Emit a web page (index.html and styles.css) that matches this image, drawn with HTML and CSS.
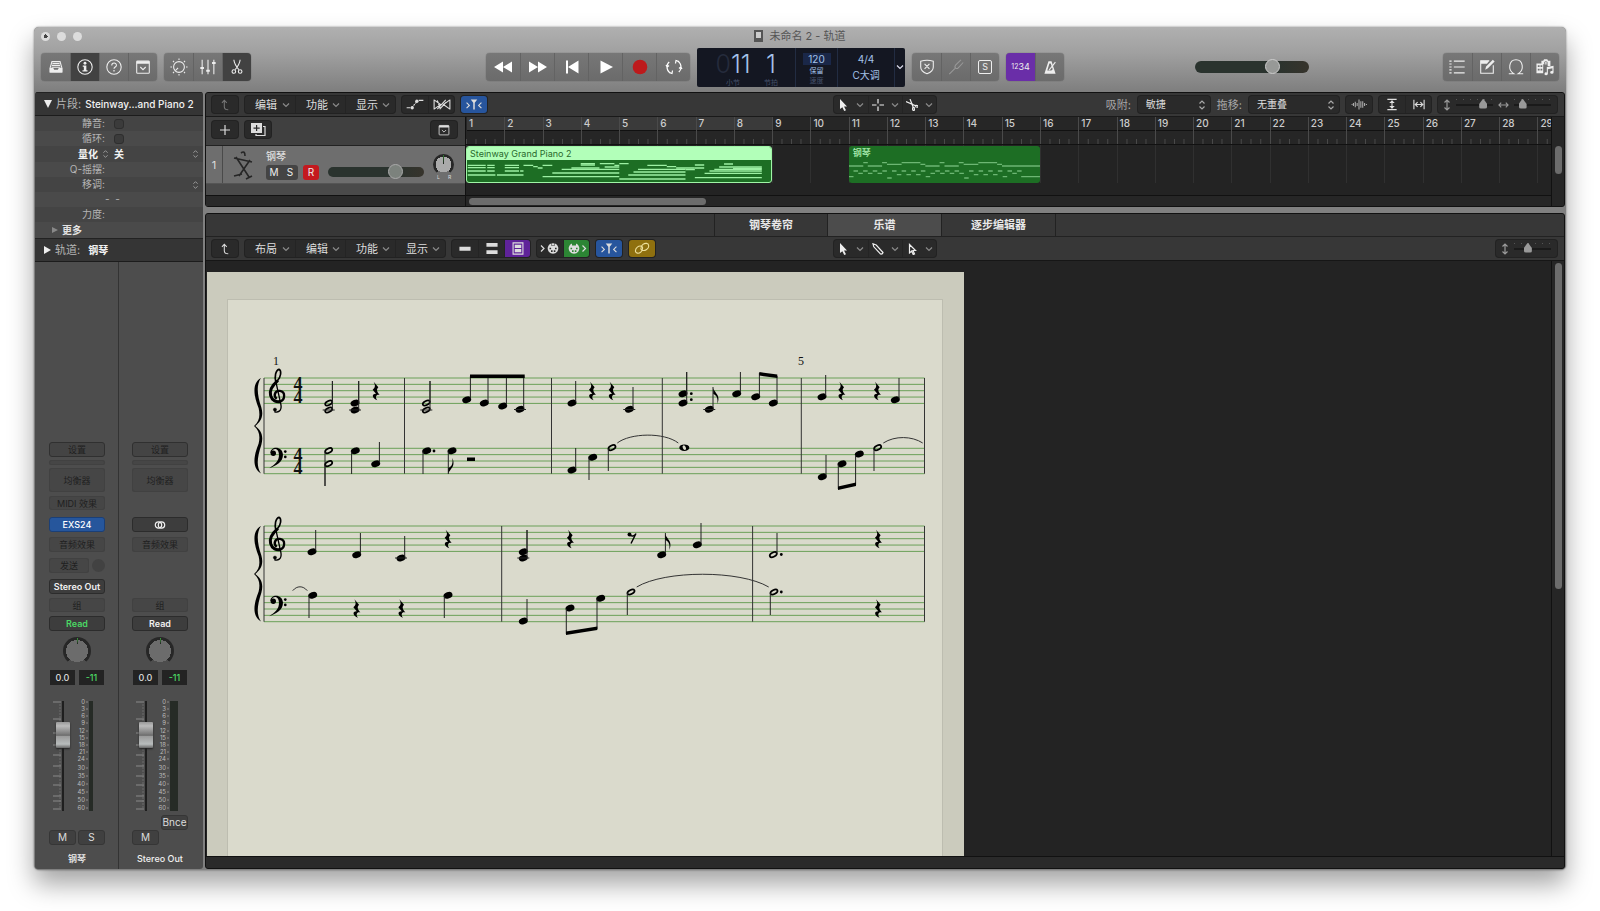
FILE: index.html
```html
<!DOCTYPE html>
<html lang="zh-CN">
<head>
  <meta charset="UTF-8" />
  <meta name="viewport" content="width=device-width, initial-scale=1.0"/>
  <title>未命名 2 - 轨道</title>
  <link rel="stylesheet" href="styles.css">
</head>
<body>
  <!-- Icon sprite -->
  <svg class="sprite" aria-hidden="true">
    <symbol id="i-chev" viewBox="0 0 8 8"><path class="ln" d="M1 2.500l3 3 3-3"/></symbol>
    <symbol id="i-updown" viewBox="0 0 8 12"><path class="ln" d="M1.500 4.500L4 2l2.500 2.500M1.500 7.500L4 10l2.500-2.500"/></symbol>
    <symbol id="i-library" viewBox="0 0 20 20"><path class="ln" d="M5.500 4h9l2 7v4.500h-13V11zM6 6.200h8M5.500 8.200h9M5 10.200h10"/><path d="M3 11h4l1 2h4l1-2h4v5H3z"/></symbol>
    <symbol id="i-info" viewBox="0 0 20 20"><circle class="ln" cx="10" cy="10" r="8"/><circle cx="10" cy="5.800" r="1.600"/><path d="M7.500 8.200h4v5.300h1.300v1.500H7.200v-1.500h1.500V9.700H7.500z"/></symbol>
    <symbol id="i-help" viewBox="0 0 20 20"><circle class="ln" cx="10" cy="10" r="8"/><path class="ln" d="M7.500 8.200c0-3.400 5.200-3.400 5.200-.2 0 2-2.700 2-2.700 4"/><circle cx="10" cy="14.300" r=".9"/></symbol>
    <symbol id="i-panel" viewBox="0 0 20 20"><rect class="ln" x="3" y="3.500" width="14" height="13.500" rx="1"/><path d="M3 3.500h14v3H3z"/><path class="ln" d="M7 10l3 3 3-3"/></symbol>
    <symbol id="i-dial" viewBox="0 0 20 20"><circle class="ln" cx="10" cy="10" r="6"/><path class="ln" d="M9 11l-3 3M10 .5v1.700M10 17.800v1.700M.5 10h1.700M17.800 10h1.700M3.300 3.300l1.200 1.200M15.500 15.500l1.200 1.200M3.300 16.700l1.200-1.200M15.500 4.500l1.200-1.200"/></symbol>
    <symbol id="i-mixer" viewBox="0 0 20 20"><path class="ln" d="M3.500 2v16M10 2v16M16.500 2v16"/><path d="M1.500 10h4v2.200h-4zM8 13h4v2.200H8zM14.500 4.500h4v2.200h-4z"/></symbol>
    <symbol id="i-scissors" viewBox="0 0 20 20"><path class="ln" d="M6.500 2c.5 4.500 3 8 5.500 11M13.500 2c-.5 4.500-3 8-5.500 11"/><circle class="ln" cx="6.500" cy="15" r="2"/><circle class="ln" cx="13.500" cy="15" r="2"/></symbol>
    <symbol id="i-rew" viewBox="0 0 20 20"><path d="M10 4.500v11L1 10zM19 4.500v11L10 10z"/></symbol>
    <symbol id="i-fwd" viewBox="0 0 20 20"><path d="M10 4.500v11l9-5.500zM1 4.500v11l9-5.500z"/></symbol>
    <symbol id="i-start" viewBox="0 0 20 20"><path d="M4 3.500h2v13H4zM16.500 3.500v13L6 10z"/></symbol>
    <symbol id="i-play" viewBox="0 0 20 20"><path d="M4.500 3.500v13L17 10z"/></symbol>
    <symbol id="i-rec" viewBox="0 0 20 20"><circle cx="10" cy="10" r="7.300"/></symbol>
    <symbol id="i-cycle" viewBox="0 0 20 20"><path class="ln" d="M7.800 16.500A6.800 6.800 0 0 1 5.200 5M12.200 3.500A6.800 6.800 0 0 1 14.800 15M4.800 15.500l3.200 1 .5-3M15.200 4.500l-3.200-1-.5 3M2 8l1.200 2L5 8.500M18 12l-1.200-2L15 11.500"/></symbol>
    <symbol id="i-shield" viewBox="0 0 20 20"><path class="ln" d="M3 3.500Q10 1.500 17 3.500V10q0 5-7 7.500-7-2.500-7-7.500zM7.300 6.500l5.400 5.500M12.700 6.500L7.300 12"/></symbol>
    <symbol id="i-fork" viewBox="0 0 20 20"><path class="ln" d="M2.500 18l7-7M15.500 2L9.500 8q-1.500 2 .2 3.300 1.500 1 2.800-.3L18 5"/></symbol>
    <symbol id="i-metro" viewBox="0 0 20 20"><path d="M8.300 3.500h3.400l4.500 14H3.800zM9.300 6l-2.300 8h4.500L13 12.500 10.800 6z" fill-rule="evenodd"/><path class="ln" d="M9 13.500l7-9"/></symbol>
    <symbol id="i-list" viewBox="0 0 20 20"><path class="ln" d="M6.500 3.500h12M6.500 10h12M6.500 16.500h12M1.500 3.500h2.500M1.500 6.700h2.500M1.500 10h2.500M1.500 13.200h2.500M1.500 16.500h2.500"/></symbol>
    <symbol id="i-note" viewBox="0 0 20 20"><path class="ln" d="M12.500 3H3v14h14V8"/><path d="M3 3h9.500L10 6.500H3zM8 13l1-3.500L16.500 2l2 2L11 11.500z"/></symbol>
    <symbol id="i-loop" viewBox="0 0 20 20"><path class="ln" d="M2 17.500h5.500c-7-4-5.500-15.500 2.500-15.500s9.500 11.500 2.500 15.500H18"/></symbol>
    <symbol id="i-media" viewBox="0 0 20 20"><path d="M6 3h2l1-1.500h3.500l1 1.500H16V9h-3V7H8v10H.500V6H6zM11 3.500a2 2 0 1 0 .01 4 2 2 0 0 0-.01-4zM2 8v2h2V8zM2 12v2h2v-2zM5 8v2h2V8zM5 12v2h2v-2z" fill-rule="evenodd"/><path d="M12 10l7.500-1.500v7.500a1.900 1.600 0 1 1-1.300-1.500V11.500l-5 1v5a1.900 1.600 0 1 1-1.200-1.500z"/><circle cx="11" cy="5.500" r="1"/></symbol>
    <symbol id="i-up" viewBox="0 0 16 16"><path class="ln" d="M4.500 5.500L7.200 2.500l2.800 3M7.200 2.500V10q0 3.500 4.500 3.500"/></symbol>
    <symbol id="i-auto" viewBox="0 0 20 14"><path class="ln" d="M1 10.500h4M14 2.500h5"/><path class="ln dash" d="M6.500 10.500L12 4"/><circle cx="7" cy="10.500" r="1.800"/><circle cx="12" cy="3.500" r="1.800"/></symbol>
    <symbol id="i-flex" viewBox="0 0 20 14"><path class="ln" d="M1.500 1.500v11M18.500 1.500v11M1.500 2l7 5-7 5M18.500 2l-7 5 7 5M5 12l9-10M5 2.500l3 9 6.500-7"/></symbol>
    <symbol id="i-catch" viewBox="0 0 20 14"><path class="ln" d="M2 5l3 3-3 3M18 5l-3 3 3 3"/><path d="M6.500 1.500h7L10.800 5v7.500H9.200V5z"/></symbol>
    <symbol id="i-plus" viewBox="0 0 12 12"><path class="ln" d="M6 1v10M1 6h10"/></symbol>
    <symbol id="i-dup" viewBox="0 0 16 14"><path d="M1 0h11v10H1zM6 2v2.500H3.500v1.200H6V8h1.200V5.700h2.500V4.500H7.200V2z" fill-rule="evenodd"/><path class="ln" d="M13 3.500h2v9H6v-1.500"/></symbol>
    <symbol id="i-cursor" viewBox="0 0 12 12"><path d="M3 0l7 7.500H7l2 3.800-1.800.7-1.800-3.800L3 10z"/></symbol>
    <symbol id="i-cursor2" viewBox="0 0 12 12"><path class="ln" d="M3.500 1.500l6 6H7l1.500 3.500-1.300.5L5.700 8l-2.200 2z"/></symbol>
    <symbol id="i-cross" viewBox="0 0 12 12"><path class="ln" d="M6 0v4.500M6 7.500V12M0 6h4.500M7.500 6H12"/></symbol>
    <symbol id="i-pencil" viewBox="0 0 12 12"><path class="ln" d="M1 .8l.8 3 6.700 7.200q2 .5 2.500-1.500L4.200 2zM3.500 2.500"/></symbol>
    <symbol id="i-cut" viewBox="0 0 12 12"><path class="ln" d="M0 2.500l9 4M4 0l3.500 9M9 6.500q3-.5 3 1t-3 0M7 8q-1 3 .5 3.500T8 8"/></symbol>
    <symbol id="i-wave" viewBox="0 0 18 14"><path class="ln" d="M1 7h1M3 5.500v3M5 4v6M7 5.500v3M9 1.500v11M11 3.500v7M13 3.500v7M15 5.500v3M17 6.500v1"/></symbol>
    <symbol id="i-vfit" viewBox="0 0 14 14"><path class="ln" d="M2 1.500h10M2 12.500h10M7 3v8"/><path d="M7 2.500l3 3H4zM7 11.500l3-3H4z"/></symbol>
    <symbol id="i-hfit" viewBox="0 0 14 14"><path class="ln" d="M1.500 2v10M12.500 2v10M3 7h8M5.500 4.500L3 7l2.500 2.500M8.500 4.500L11 7 8.500 9.500"/></symbol>
    <symbol id="i-vert" viewBox="0 0 8 12"><path class="ln" d="M4 1.500v9M1.500 3.500L4 1l2.500 2.500M1.500 8.500L4 11l2.500-2.500"/></symbol>
    <symbol id="i-horz" viewBox="0 0 12 8"><path class="ln" d="M1.500 4h9M3.500 1.500L1 4l2.500 2.500M8.500 1.500L11 4 8.500 6.500"/></symbol>
    <symbol id="i-v1" viewBox="0 0 14 14"><path d="M1 5h12v4.500H1z"/></symbol>
    <symbol id="i-v2" viewBox="0 0 14 14"><path d="M1 1h12v4H1zM1 9h12v4H1z"/></symbol>
    <symbol id="i-v3" viewBox="0 0 14 14"><path class="ln" d="M1.700 1h10.600v12H1.700z"/><path d="M3.500 3h7v3.500h-7zM3.500 7.500h7V11h-7z"/></symbol>
    <symbol id="i-midi-in" viewBox="0 0 20 12"><path class="ln" d="M1 3l3 3-3 3"/><path d="M13 .7l1.500.2v1.600h-3V.9zM11 1v2h4V1a5.300 5.300 0 1 1-4 0zM9.500 5.200v1.600h1.600V5.200zM11 7.800v1.600h1.600V7.800zM13.800 7.800v1.600h1.600V7.800zM15 5.200v1.600h1.600V5.200z" fill-rule="evenodd"/></symbol>
    <symbol id="i-midi-out" viewBox="0 0 20 12"><path class="ln" d="M15.500 3l3 3-3 3"/><path d="M5 1v2h4V1a5.300 5.300 0 1 1-4 0zM3.500 5.200v1.600h1.600V5.200zM5 7.800v1.600h1.600V7.800zM7.800 7.800v1.600h1.600V7.800zM9 5.200v1.600h1.600V5.200z" fill-rule="evenodd"/></symbol>
    <symbol id="i-link" viewBox="0 0 18 14"><path class="ln" d="M9.500 7.500C10.500 4 6.500 3.500 4 5.500S1 11.500 4 12s5-2 5.500-4.500M8 6c-1 3.500 3 4 6 2s3-6 0-6.500S8.500 3.500 8 6"/></symbol>
    <symbol id="i-stereo" viewBox="0 0 12 10"><circle class="ln" cx="4.500" cy="5" r="3.200"/><circle class="ln" cx="7.500" cy="5" r="3.200"/></symbol>
    <symbol id="i-keys" viewBox="0 0 24 32"><path class="stand" d="M4 8l13 20M18 11L7 27M2 9l18 4M9 4q4-3 4 3M2 27l8-2M14 30l6-3"/></symbol>
  </svg>

  <div class="window">
    <!-- Title bar + control bar -->
    <header class="topbar">
      <div class="titlebar">
        <div class="lights"><i class="edited"></i><i></i><i></i></div>
        <h1><span class="doc"></span>未命名 2 - 轨道</h1>
      </div>
      <div class="controls">
        <div class="group">
          <button aria-label="资源库"><svg><use href="#i-library"/></svg></button>
          <button class="pressed" aria-label="检查器"><svg><use href="#i-info"/></svg></button>
          <button aria-label="快速帮助"><svg><use href="#i-help"/></svg></button>
          <button aria-label="工具栏"><svg><use href="#i-panel"/></svg></button>
        </div>
        <div class="group">
          <button aria-label="智能控制"><svg><use href="#i-dial"/></svg></button>
          <button aria-label="混音器"><svg><use href="#i-mixer"/></svg></button>
          <button class="pressed" aria-label="编辑器"><svg><use href="#i-scissors"/></svg></button>
        </div>
        <div class="space-left"></div>
        <div class="group transport">
          <button aria-label="倒回"><svg><use href="#i-rew"/></svg></button>
          <button aria-label="快进"><svg><use href="#i-fwd"/></svg></button>
          <button aria-label="返回开头"><svg><use href="#i-start"/></svg></button>
          <button aria-label="播放"><svg><use href="#i-play"/></svg></button>
          <button class="rec" aria-label="录音"><svg><use href="#i-rec"/></svg></button>
          <button aria-label="循环"><svg><use href="#i-cycle"/></svg></button>
        </div>
        <div class="lcd">
          <div class="lcd-pos">
            <div><b><span class="off">0</span>11</b><small>小节</small></div>
            <div><b>1</b><small>节拍</small></div>
          </div>
          <div class="lcd-tempo"><span class="bpm">120</span><span>保留</span><small>速度</small></div>
          <div class="lcd-key"><span>4/4</span><span>C大调</span></div>
          <button class="lcd-menu" aria-label="显示模式"><svg><use href="#i-chev"/></svg></button>
        </div>
        <div class="group three">
          <button aria-label="替换"><svg><use href="#i-shield"/></svg></button>
          <button class="dim" aria-label="调音器"><svg><use href="#i-fork"/></svg></button>
          <button aria-label="独奏"><span class="solo-box">S</span></button>
        </div>
        <div class="group">
          <button class="count"><small>12</small>34</button>
          <button aria-label="节拍器"><svg><use href="#i-metro"/></svg></button>
        </div>
        <div class="space-mid"></div>
        <input class="volume master" type="range" min="0" max="100" value="71" aria-label="主音量">
        <div class="space-right"></div>
        <div class="group">
          <button aria-label="列表"><svg><use href="#i-list"/></svg></button>
          <button aria-label="记事本"><svg><use href="#i-note"/></svg></button>
          <button aria-label="循环浏览器"><svg><use href="#i-loop"/></svg></button>
          <button aria-label="媒体"><svg><use href="#i-media"/></svg></button>
        </div>
      </div>
    </header>

    <main class="workspace">
      <!-- Inspector -->
      <aside class="inspector">
        <div class="insp-head"><i class="tri down"></i>片段: <b>Steinway...and Piano 2</b></div>
        <div class="params">
          <div class="param"><label for="mute">静音:</label><input type="checkbox" id="mute"></div>
          <div class="param"><label for="loop">循环:</label><input type="checkbox" id="loop"></div>
          <div class="param bright"><span class="name">量化 <svg><use href="#i-updown"/></svg></span><span class="value">关</span><svg><use href="#i-updown"/></svg></div>
          <div class="param"><span class="name">Q-摇摆:</span></div>
          <div class="param"><span class="name">移调:</span><span class="value"></span><svg><use href="#i-updown"/></svg></div>
          <div class="param dashes"><span class="name"></span>-&nbsp; -</div>
          <div class="param"><span class="name">力度:</span></div>
          <div class="param more"><i class="tri right"></i>更多</div>
        </div>
        <div class="insp-head"><i class="tri right"></i>轨道: <b class="cjk">钢琴</b></div>

        <div class="mixer">
          <section class="strip">
            <button class="slot dark h-setup">设置</button>
            <span class="slot thin"></span>
            <button class="slot flat h-eq">均衡器</button>
            <button class="slot flat h-midi">MIDI 效果</button>
            <button class="slot blue">EXS24</button>
            <button class="slot flat h-fx">音频效果</button>
            <div class="send"><button class="slot flat">发送</button><i></i></div>
            <button class="slot lit">Stereo Out</button>
            <button class="slot flat h-group">组</button>
            <button class="slot lit green">Read</button>
            <input class="knob" type="range" aria-label="声相">
            <div class="readout"><span>0.0</span><span class="green">-11</span></div>
            <div class="fader">
              <svg class="scale" data-meter="4" width="56" height="112"></svg>
              <input type="range" min="0" max="100" value="76" aria-label="音量">
            </div>
            <div class="bnce"></div>
            <div class="ms"><button>M</button><button>S</button></div>
            <div class="strip-name cjk">钢琴</div>
          </section>
          <section class="strip">
            <button class="slot dark h-setup">设置</button>
            <span class="slot thin"></span>
            <button class="slot flat h-eq">均衡器</button>
            <span class="slot empty h-midi"></span>
            <button class="slot lit" aria-label="立体声"><svg><use href="#i-stereo"/></svg></button>
            <button class="slot flat h-fx">音频效果</button>
            <div class="send"></div>
            <span class="slot empty"></span>
            <button class="slot flat h-group">组</button>
            <button class="slot lit">Read</button>
            <input class="knob" type="range" aria-label="声相">
            <div class="readout"><span>0.0</span><span class="green">-11</span></div>
            <div class="fader">
              <svg class="scale" data-meter="8" width="56" height="112"></svg>
              <input type="range" min="0" max="100" value="76" aria-label="音量">
            </div>
            <div class="bnce"><button>Bnce</button></div>
            <div class="ms"><button>M</button></div>
            <div class="strip-name">Stereo Out</div>
          </section>
        </div>
      </aside>

      <div class="main">
        <!-- Tracks area -->
        <section class="tracks">
          <div class="toolbar">
            <div class="tb-left">
              <button class="tb-btn faded" aria-label="上一级"><svg class="s16"><use href="#i-up"/></svg></button>
              <div class="tb-group menus">
                <button>编辑<svg><use href="#i-chev"/></svg></button>
                <button>功能<svg><use href="#i-chev"/></svg></button>
                <button>显示<svg><use href="#i-chev"/></svg></button>
              </div>
              <div class="tb-group icons">
                <button aria-label="自动化"><svg><use href="#i-auto"/></svg></button>
                <button aria-label="Flex"><svg><use href="#i-flex"/></svg></button>
              </div>
              <button class="tb-btn blue" aria-label="跟随"><svg class="wide"><use href="#i-catch"/></svg></button>
            </div>
            <div class="tb-group tools">
              <button aria-label="指针"><svg class="s12"><use href="#i-cursor"/></svg><svg class="chev"><use href="#i-chev"/></svg></button>
              <button aria-label="选取框"><svg class="s12"><use href="#i-cross"/></svg><svg class="chev"><use href="#i-chev"/></svg></button>
              <button aria-label="剪刀"><svg class="s12"><use href="#i-cut"/></svg><svg class="chev"><use href="#i-chev"/></svg></button>
            </div>
            <div class="tb-right">
              <label for="snap">吸附:</label>
              <span class="select snap"><select id="snap"><option>敏捷</option></select><svg><use href="#i-updown"/></svg></span>
              <label for="drag">拖移:</label>
              <span class="select drag"><select id="drag"><option>无重叠</option></select><svg><use href="#i-updown"/></svg></span>
              <button class="tb-btn" aria-label="波形缩放"><svg class="wide"><use href="#i-wave"/></svg></button>
              <div class="tb-group icons">
                <button aria-label="垂直适应"><svg class="s14"><use href="#i-vfit"/></svg></button>
                <button aria-label="水平适应"><svg class="s14"><use href="#i-hfit"/></svg></button>
              </div>
              <div class="tb-group zoom">
                <svg class="v"><use href="#i-vert"/></svg><input type="range" value="80" aria-label="垂直缩放">
                <svg class="h"><use href="#i-horz"/></svg><input type="range" value="16" aria-label="水平缩放">
              </div>
            </div>
          </div>
          <div class="arrange">
            <div class="track-col">
              <div class="track-tools">
                <button class="tb-btn" aria-label="新建轨道"><svg class="s12"><use href="#i-plus"/></svg></button>
                <button class="tb-btn" aria-label="复制轨道"><svg class="s16"><use href="#i-dup"/></svg></button>
                <button class="tb-btn last" aria-label="轨道头设置"><svg class="s16"><use href="#i-panel"/></svg></button>
              </div>
              <div class="track">
                <span class="num">1</span>
                <svg class="keys"><use href="#i-keys"/></svg>
                <div class="track-info">
                  <span class="track-name">钢琴</span>
                  <div class="track-ctl">
                    <div class="msr"><button>M</button><button>S</button></div>
                    <button class="rbtn">R</button>
                    <input class="volume" type="range" min="0" max="100" value="74" aria-label="轨道音量">
                  </div>
                </div>
                <div class="pan"><input class="knob small" type="range" aria-label="声相"><span>L</span><span>R</span></div>
              </div>
              <div class="track-foot"></div>
            </div>
            <div class="timeline">
              <div class="ruler" id="ruler"></div>
              <div class="lane">
                <div class="grid" id="grid"></div>
                <div class="regions">
                  <div class="region selected"><span>Steinway Grand Piano 2</span><svg id="region1" viewBox="0 0 813 66" preserveAspectRatio="none"></svg></div>
                  <div class="region"><span class="cjk">钢琴</span><svg id="region2" viewBox="0 0 509 66" preserveAspectRatio="none"></svg></div>
                </div>
              </div>
              <div class="hscroll"><i></i></div>
            </div>
            <div class="vscroll"><i></i></div>
          </div>
        </section>

        <!-- Score editor -->
        <section class="editor">
          <nav class="tabs">
            <button>钢琴卷帘</button>
            <button class="active">乐谱</button>
            <button>逐步编辑器</button>
          </nav>
          <div class="toolbar">
            <div class="tb-left">
              <button class="tb-btn" aria-label="上一级"><svg class="s16"><use href="#i-up"/></svg></button>
              <div class="tb-group menus">
                <button>布局<svg><use href="#i-chev"/></svg></button>
                <button>编辑<svg><use href="#i-chev"/></svg></button>
                <button>功能<svg><use href="#i-chev"/></svg></button>
                <button>显示<svg><use href="#i-chev"/></svg></button>
              </div>
              <div class="tb-group icons">
                <button aria-label="线性视图"><svg class="s14"><use href="#i-v1"/></svg></button>
                <button aria-label="折行视图"><svg class="s14"><use href="#i-v2"/></svg></button>
                <button class="purple" aria-label="页面视图"><svg class="s14"><use href="#i-v3"/></svg></button>
              </div>
              <div class="tb-group icons">
                <button aria-label="MIDI 输入"><svg><use href="#i-midi-in"/></svg></button>
                <button class="greenbg" aria-label="MIDI 输出"><svg><use href="#i-midi-out"/></svg></button>
              </div>
              <button class="tb-btn blue" aria-label="跟随"><svg class="wide"><use href="#i-catch"/></svg></button>
              <button class="tb-btn gold" aria-label="链接"><svg class="wide"><use href="#i-link"/></svg></button>
            </div>
            <div class="tb-group tools">
              <button aria-label="指针"><svg class="s12"><use href="#i-cursor"/></svg><svg class="chev"><use href="#i-chev"/></svg></button>
              <button aria-label="铅笔"><svg class="s12"><use href="#i-pencil"/></svg><svg class="chev"><use href="#i-chev"/></svg></button>
              <button aria-label="选择"><svg class="s12"><use href="#i-cursor2"/></svg><svg class="chev"><use href="#i-chev"/></svg></button>
            </div>
            <div class="tb-right">
              <div class="tb-group zoom">
                <svg class="v"><use href="#i-vert"/></svg><input type="range" value="34" aria-label="垂直缩放">
              </div>
            </div>
          </div>
          <div class="score-area">
            <div class="desk">
              <svg id="score" width="757" height="586" viewBox="207 272 757 586"></svg>
            </div>
            <div class="vscroll tall"><i></i></div>
          </div>
          <div class="editor-foot"></div>
        </section>
      </div>
    </main>
  </div>
  <script src="score.js"></script>
</body>
</html>
```

FILE: styles.css
```css
* {
  box-sizing: border-box;
}

body {
  margin: 0;
  padding: 27px 34px 41px 34px;
  min-height: 100vh;
  display: flex;
  background: #fff;
  font-family: Inter, "Noto Sans CJK SC", sans-serif;
  font-size: 11px;
  line-height: 14px;
  color: #ddd;
}

button, select, input {
  font: inherit;
  color: inherit;
  margin: 0;
  padding: 0;
  border: 0;
  background: none;
}

button {
  display: flex;
  align-items: center;
  justify-content: center;
}

svg {
  display: block;
  fill: currentColor;
}

.sprite {
  position: absolute;
  width: 0;
  height: 0;
}

.ln {
  fill: none;
  stroke: currentColor;
  stroke-width: 1.2;
}

.dash {
  stroke-dasharray: 2 1;
}

.cjk {
  font-family: "Noto Sans CJK SC", sans-serif;
}

.window {
  flex: 1;
  display: flex;
  flex-direction: column;
  min-width: 0;
  padding: 0 1px 1px;
  border-radius: 5px;
  background: #808080;
  box-shadow: 0 0 2px rgba(0, 0, 0, 0.5), 0 14px 26px rgba(0, 0, 0, 0.36);
}

/* Top bar */
.topbar {
  height: 65px;
  margin: 0 -1px;
  padding: 0 7px;
  border-radius: 5px 5px 0 0;
  background: linear-gradient(#b0b0b0, #a0a0a0 40%, #7e7e7e);
}

.titlebar {
  display: grid;
  grid-template-columns: 1fr auto 1fr;
  align-items: center;
  height: 18px;
}

.lights {
  display: flex;
  gap: 7px;
}

.lights i {
  width: 9px;
  height: 9px;
  border-radius: 50%;
  background: #dcdcdc;
}

.lights .edited {
  background: radial-gradient(circle, #444 0 2px, #dcdcdc 2px);
}

h1 {
  display: flex;
  align-items: center;
  gap: 6px;
  margin: 0;
  font-size: 11px;
  font-weight: 400;
  line-height: 18px;
  color: #555;
}

.doc {
  width: 9px;
  height: 12px;
  border: 2px solid #555;
  border-bottom-width: 4px;
  background: #ccc;
}

.controls {
  display: flex;
  align-items: center;
  gap: 7px;
  height: 44px;
}

.space-left { flex: 222; }
.space-mid { flex: 117; }
.space-right { flex: 121; }

.group {
  display: flex;
  height: 28px;
  border-radius: 4px;
  overflow: hidden;
  background: linear-gradient(#777, #6b6b6b);
  box-shadow: 0 0 1px #444;
  color: #eee;
}

.group button {
  width: 29px;
  border-left: 1px solid #636363;
}

.group button:first-child {
  border-left: 0;
}

.group svg {
  width: 18px;
  height: 18px;
}

.group .pressed {
  background: #424242;
}

.transport button {
  width: 34px;
}

.transport svg {
  width: 20px;
  height: 20px;
  color: #fff;
}

.transport .rec svg {
  color: #bd1a1c;
}

.three .dim {
  color: #989898;
}

.solo-box {
  width: 14px;
  height: 14px;
  border: 1px solid #eee;
  border-radius: 2px;
  font-size: 9px;
  line-height: 12px;
}

.group .count {
  background: #6a2ea8;
  font-size: 9px;
}

.count small {
  font-size: 7px;
}

.lcd {
  display: flex;
  height: 39px;
  border-radius: 2px;
  background: #141722;
  color: #a4c2e8;
}

.lcd > * + * {
  border-left: 1px solid #222c42;
}

.lcd small {
  font-size: 7px;
  line-height: 8px;
  color: #44506a;
}

.lcd-pos {
  display: flex;
  width: 98px;
  padding-left: 17px;
}

.lcd-pos div {
  display: flex;
  flex-direction: column;
  align-items: center;
  width: 38px;
}

.lcd-pos b {
  font-size: 25px;
  font-weight: 300;
  line-height: 30px;
  padding-top: 1px;
}

.off {
  color: #252b3c;
}

.lcd-tempo {
  display: flex;
  flex-direction: column;
  align-items: center;
  width: 42px;
  padding-top: 5px;
  font-size: 7px;
  line-height: 12px;
}

.bpm {
  width: 28px;
  background: #1a2748;
  font-size: 10px;
  text-align: center;
}

.lcd-key {
  display: flex;
  flex-direction: column;
  align-items: center;
  width: 57px;
  padding-top: 3px;
  font-size: 10px;
  line-height: 16px;
}

.lcd-menu {
  width: 11px;
  color: #dde;
}

.lcd-menu svg {
  width: 8px;
  height: 8px;
}

/* Horizontal volume sliders */
.volume {
  appearance: none;
  width: 96px;
  height: 16px;
}

.volume::-webkit-slider-runnable-track {
  height: 10px;
  border-radius: 5px;
  background: linear-gradient(90deg, #2a332e 70%, #37342c);
}

.volume::-webkit-slider-thumb {
  appearance: none;
  width: 15px;
  height: 15px;
  margin-top: -3px;
  border: 1px solid #aaa;
  border-radius: 50%;
  background: #7c827d;
}

.volume.master {
  width: 114px;
}

.volume.master::-webkit-slider-runnable-track {
  height: 12px;
  border-radius: 6px;
}

.volume.master::-webkit-slider-thumb {
  margin-top: -2px;
  border-color: #ccc;
  background: #979997;
}

.workspace {
  flex: 1;
  display: flex;
  gap: 2px;
  min-height: 0;
}

/* Inspector */
.inspector {
  display: flex;
  flex-direction: column;
  width: 168px;
  background: #4d4d4d;
  border-radius: 3px;
  overflow: hidden;
}

.insp-head {
  display: flex;
  align-items: center;
  gap: 4px;
  height: 24px;
  padding-left: 9px;
  border-top: 1px solid #222;
  border-bottom: 1px solid #1c1c1c;
  background: #353535;
  color: #b5b5b5;
  white-space: nowrap;
}

.insp-head b {
  font-size: 10px;
  font-weight: 500;
  color: #f2f2f2;
}

.insp-head .cjk {
  font-weight: 700;
  padding-left: 4px;
}

.tri.down {
  border: 4px solid transparent;
  border-top: 8px solid #eee;
  border-bottom: 0;
}

.tri.right {
  border: 4px solid transparent;
  border-left: 7px solid #eee;
  border-right: 0;
}

.params {
  background: #444;
}

.param {
  display: flex;
  align-items: center;
  height: 15px;
  padding-right: 4px;
  font-size: 10px;
  line-height: 15px;
  color: #b4b4b4;
}

.param:nth-child(even) {
  background: #4a4a4a;
}

.param label, .param .name {
  display: flex;
  align-items: center;
  justify-content: flex-end;
  width: 70px;
}

.param input {
  appearance: none;
  width: 10px;
  height: 10px;
  margin-left: 9px;
  border: 1px solid #2e2e2e;
  border-radius: 3px;
  background: #3b3b3b;
}

.param svg {
  width: 7px;
  height: 10px;
  color: #999;
}

.param .name svg {
  margin-left: 4px;
}

.param.bright {
  height: 16px;
  font-weight: 700;
  color: #f2f2f2;
}

.bright .name {
  width: 74px;
}

.bright .value {
  padding-left: 5px;
}

.param .value {
  flex: 1;
}

.param.more {
  height: 16px;
  gap: 4px;
  padding-left: 17px;
  font-weight: 700;
  color: #e2e2e2;
}

.more .tri.right {
  border-width: 3px 0 3px 6px;
  border-left-color: #888;
}

.mixer {
  flex: 1;
  display: flex;
}

.strip {
  flex: 0 0 83px;
  display: flex;
  flex-direction: column;
  justify-content: flex-end;
  padding: 0 13px 3px 14px;
}

.strip + .strip {
  padding-left: 13px;
  border-left: 1px solid #333;
}

.slot {
  height: 15px;
  margin-bottom: 5px;
  border-radius: 3px;
  font-size: 9px;
  line-height: 13px;
  color: #1f1f1f;
}

.flat, .thin {
  background: #464646;
  box-shadow: 0 0 0 1px #414141 inset;
}

.dark {
  background: #444;
  border: 1px solid #303030;
}

.lit {
  background: #3d3d3d;
  border: 1px solid #2c2c2c;
  font-weight: 600;
  color: #f0f0f0;
}

.lit svg {
  width: 12px;
  height: 10px;
}

.slot.blue {
  background: #26569c;
  border: 1px solid #1b3f76;
  color: #fff;
  font-weight: 500;
}

.slot.green, .readout .green {
  color: #4bd864;
}

.h-setup { margin-bottom: 3px; }
.slot.thin { height: 5px; margin-bottom: 3px; }
.slot.h-eq { height: 24px; margin-bottom: 4px; }
.slot.h-midi { height: 14px; margin-bottom: 7px; }
.slot.h-fx { margin-bottom: 6px; }
.slot.h-group { height: 14px; margin-bottom: 4px; }

.send {
  display: flex;
  align-items: center;
  gap: 3px;
  height: 15px;
  margin-bottom: 6px;
}

.send .slot {
  width: 40px;
  margin: 0;
}

.send i {
  width: 13px;
  height: 13px;
  border-radius: 50%;
  background: #424242;
}

.slot.h-group + .slot {
  margin-bottom: 6px;
}

.slot.lit:has(+ .h-group), .slot.empty:has(+ .h-group) {
  margin-bottom: 4px;
}

.knob {
  appearance: none;
  align-self: center;
  width: 28px;
  height: 28px;
  border-radius: 50%;
  background:
    linear-gradient(#3aa23a, #222) center 1px / 1px 6px no-repeat,
    radial-gradient(circle, #6c6c6c 0 11px, transparent 11px),
    conic-gradient(#272727 140deg, transparent 0 220deg, #272727 0);
}

.knob::-webkit-slider-thumb {
  appearance: none;
  width: 0;
  height: 0;
}

.readout {
  display: flex;
  justify-content: space-between;
  margin: 5px 1px 16px;
}

.readout span {
  width: 25px;
  height: 15px;
  background: #232323;
  font-size: 9px;
  font-weight: 500;
  line-height: 15px;
  text-align: center;
}

.fader {
  position: relative;
  height: 112px;
}

.scale {
  overflow: visible;
}

.scale line {
  stroke: #8a8a8a;
}

.scale text {
  font-size: 6px;
  fill: #bbb;
  text-anchor: end;
}

/* The fader cap lies over the tick marks */
.fader input {
  position: absolute;
  left: 7px;
  top: 0;
  appearance: none;
  width: 14px;
  height: 112px;
  writing-mode: vertical-lr;
  direction: rtl;
}

.fader input::-webkit-slider-thumb {
  appearance: none;
  width: 14px;
  height: 26px;
  border-radius: 1px;
  background: linear-gradient(#999, #bbb 15%, #777 48%, #333 50%, #999 53%, #b8bcbc 85%, #666);
  box-shadow: 0 1px 2px #222;
}

.bnce {
  display: flex;
  justify-content: flex-end;
  height: 15px;
  margin-top: 2px;
}

.bnce button, .ms button {
  width: 27px;
  height: 15px;
  border: 1px solid #363636;
  border-radius: 3px;
  background: #404040;
  font-size: 10px;
  line-height: 13px;
}

.ms {
  display: flex;
  gap: 2px;
}

.strip-name {
  margin-top: 7px;
  font-size: 9px;
  font-weight: 500;
  text-align: center;
  color: #f0f0f0;
}

/* Tracks area */
.main {
  flex: 1;
  display: flex;
  flex-direction: column;
  gap: 6px;
  min-width: 0;
}

.tracks, .editor {
  display: flex;
  flex-direction: column;
  border: 1px solid #111;
  border-radius: 3px;
  overflow: hidden;
  background: #232323;
}

.toolbar {
  display: grid;
  grid-template-columns: 1fr auto 1fr;
  align-items: center;
  height: 23px;
  padding: 0 7px 0 6px;
  background: #373737;
}

.tb-left, .tb-right {
  display: flex;
  align-items: center;
  gap: 7px;
}

.tb-right {
  justify-content: flex-end;
  color: #a8a8a8;
}

.tb-btn, .tb-group, .select {
  height: 17px;
  border-radius: 3px;
  background: #2a2a2a;
  box-shadow: 0 0 0 1px #222;
}

.tb-btn {
  width: 26px;
}

.tb-group {
  display: flex;
  align-items: center;
  overflow: hidden;
  color: #ddd;
}

.tb-group button {
  height: 17px;
}

.tb-group button + button {
  border-left: 1px solid #242424;
}

.faded {
  color: #777;
}

.menus button {
  width: 50px;
  justify-content: space-between;
  padding: 0 5px 0 10px;
}

.menus svg, .tools .chev {
  width: 8px;
  height: 8px;
  color: #8a8a8a;
}

.icons button {
  width: 26px;
}

.icons svg {
  width: 20px;
  height: 13px;
}

.tools button {
  width: 34px;
  gap: 7px;
  color: #eee;
}

.s16 { width: 16px; height: 14px; }
.s12 { width: 12px; height: 12px; }
.wide { width: 20px; height: 13px; }

.blue { background: #27559d; }
.purple { background: #5f2399; }
.greenbg { background: #2c8534; }
.gold { background: #8f700f; color: #eddf9b; }

.select {
  position: relative;
  width: 72px;
}

.select.drag {
  width: 90px;
}

.select select {
  appearance: none;
  width: 100%;
  height: 17px;
  padding-left: 8px;
  font-size: 10px;
  line-height: 17px;
  color: #ddd;
}

.select svg {
  position: absolute;
  right: 4px;
  top: 3px;
  width: 8px;
  height: 12px;
  pointer-events: none;
}

.zoom {
  gap: 5px;
  padding: 0 6px 0 5px;
  color: #9a9a9a;
}

.zoom .v { width: 8px; height: 12px; }
.zoom .h { width: 11px; height: 8px; }

.zoom input {
  appearance: none;
  width: 37px;
  height: 17px;
  background: repeating-linear-gradient(90deg, #555 0 1px, transparent 1px 7px) 0 3px / 100% 1px no-repeat;
}

.zoom input::-webkit-slider-runnable-track {
  height: 2px;
  background: #1a1a1a;
}

.zoom input::-webkit-slider-thumb {
  appearance: none;
  width: 8px;
  height: 10px;
  margin-top: -5px;
  border-radius: 4px 4px 2px 2px;
  background: #999;
  clip-path: polygon(50% 0, 100% 55%, 100% 100%, 0 100%, 0 55%);
}

.arrange {
  display: flex;
  height: 90px;
  border-top: 1px solid #1a1a1a;
}

.track-col {
  display: flex;
  flex-direction: column;
  width: 260px;
  border-right: 1px solid #111;
  background: #4a4a4a;
}

.track-tools {
  display: flex;
  align-items: center;
  gap: 7px;
  height: 28px;
  padding: 0 8px 3px 6px;
  background: #404040;
}

.track-tools .last {
  margin-left: auto;
}

.track {
  display: flex;
  height: 39px;
  border-top: 1px solid #222;
  border-bottom: 1px solid #555;
  background: #6e6e6e;
}

.num {
  width: 17px;
  border-right: 1px solid #4a4a4a;
  line-height: 39px;
  text-align: center;
}

.keys {
  width: 24px;
  height: 32px;
  margin: 3px 10px 0 9px;
}

.stand {
  fill: none;
  stroke: #262626;
  stroke-width: 1.6;
}

.track-name {
  font-size: 10px;
  font-weight: 500;
  line-height: 16px;
}

.track-info {
  padding-top: 2px;
}

.track-ctl {
  display: flex;
  align-items: center;
}

.msr {
  display: flex;
  margin-right: 5px;
}

.msr button, .rbtn {
  width: 16px;
  height: 15px;
  background: #444;
  color: #eee;
  font-size: 10px;
}

.msr button:first-child { border-radius: 3px 0 0 3px; }
.msr button:last-child { border-radius: 0 3px 3px 0; }

.track-ctl .rbtn {
  margin-right: 9px;
  border-radius: 3px;
  background: #c4191f;
}

.pan {
  display: grid;
  grid-template-columns: 11px 11px;
  align-content: start;
  padding: 8px 0 0 9px;
}

.pan span {
  font-size: 5px;
  line-height: 5px;
  text-align: center;
}

.knob.small {
  grid-column: span 2;
  width: 21px;
  height: 21px;
  background:
    linear-gradient(#2f7a2f, #222) center 1px / 1px 9px no-repeat,
    radial-gradient(circle, #aaa 0 8px, transparent 8px),
    conic-gradient(#272727 140deg, transparent 0 220deg, #272727 0);
}

.track-foot {
  margin-top: auto;
  height: 11px;
  border-top: 1px solid #111;
  background: #2a2a2a;
}

.timeline {
  --bar: calc(100% / 28.35);
  flex: 1;
  display: flex;
  flex-direction: column;
  min-width: 0;
}

.ruler, .grid {
  display: flex;
  overflow: hidden;
}

.ruler {
  height: 28px;
  border-bottom: 1px solid #111;
  background: #262626;
}

.bar {
  flex: 0 0 var(--bar);
  height: 27px;
  border-left: 1px solid #4a4a4a;
}

.bar:first-child {
  border-left-color: transparent;
}

.bar b {
  display: block;
  height: 14px;
  padding-left: 2px;
  border-bottom: 1px solid #111;
  font-size: 10px;
  font-weight: 500;
  line-height: 12px;
  color: #ccc;
}

.bar.cycle b {
  background: #3a3a3a;
}

.bar i {
  display: block;
  height: 5px;
  margin: 8px 0 0 -1px;
  background: linear-gradient(90deg, #4a4a4a 1px, transparent 1px) 0 0 / 25% 100%;
}

.lane {
  position: relative;
  height: 51px;
}

.grid {
  height: 38px;
}

.grid span {
  flex: 0 0 var(--bar);
  border-left: 1px solid #303030;
}

/* Regions lie over the bar grid */
.regions {
  position: absolute;
  inset: 1px 0 auto;
  display: flex;
  height: 37px;
}

.region {
  flex: 0 0 calc(var(--bar) * 5);
  margin-left: calc(var(--bar) * 2);
  border-radius: 3px;
  background: #1d6e24;
  overflow: hidden;
  font-size: 9px;
  font-weight: 500;
  line-height: 13px;
  color: #aef0b3;
}

.region span {
  display: block;
  padding-left: 4px;
}

.region svg {
  width: 100%;
  height: 22px;
  margin-top: 1px;
  stroke: #6db673;
}

.region.selected {
  flex-basis: calc(var(--bar) * 8);
  margin-left: 0;
  border: 1px solid #9ff5a6;
  font-weight: 400;
  color: #28692c;
}

.selected span {
  background: #b2ffb9;
  padding-left: 3px;
}

.selected svg {
  stroke: #9df0a3;
}

.hscroll, .vscroll {
  background: #262626;
}

.hscroll {
  height: 11px;
  padding: 2px 3px;
  border-top: 1px solid #111;
}

.hscroll i {
  display: block;
  width: 22%;
  height: 7px;
  border-radius: 4px;
  background: #6c6c6c;
}

.vscroll {
  width: 13px;
  padding: 29px 2px 0 3px;
  border-left: 1px solid #111;
}

.vscroll i {
  display: block;
  width: 7px;
  height: 28px;
  border-radius: 4px;
  background: #6c6c6c;
}

/* Editor */
.editor {
  flex: 1;
}

.tabs {
  display: flex;
  justify-content: center;
  height: 23px;
  border-bottom: 1px solid #222;
  background: #373737;
}

.tabs button {
  width: 114px;
  border-right: 1px solid #222;
  font-size: 11px;
  font-weight: 600;
  color: #e8e8e8;
}

.tabs button:first-child {
  border-left: 1px solid #222;
}

.tabs .active {
  background: #4c4c4c;
}

.score-area {
  flex: 1;
  display: flex;
  border-top: 1px solid #161616;
}

.desk {
  flex: 1;
  min-width: 0;
  height: 0;
  min-height: 100%;
  padding: 11px 0 0 1px;
  overflow: hidden;
}

#score .paper { fill: #cbcbbd; }
#score .margin { fill: #dadacc; stroke: #bdbdb0; }
#score .staff { stroke: #6ba058; }
#score .barline { stroke: #333; }
#score .stem { stroke: #222; }
#score .ink, #score .clef { fill: #000; }
#score .half { fill: none; stroke: #000; stroke-width: 1.7; }
#score .curve { fill: none; stroke: #333; }
#score .hook { fill: none; stroke: #000; stroke-width: 1.4; }
#score .spiral { fill: none; stroke: #000; }

#score text {
  font-family: "Liberation Serif", serif;
  font-size: 12px;
  fill: #111;
  text-anchor: middle;
}

#score .time {
  font-size: 18px;
  font-weight: 700;
}

.vscroll.tall {
  padding-top: 2px;
}

.tall i {
  height: 55%;
}

.editor-foot {
  height: 12px;
  border-top: 1px solid #111;
  background: #2a2a2a;
}
```

FILE: score.js
```js
// Ruler and bar grid
const ruler = document.getElementById("ruler");
const grid = document.getElementById("grid");
for (let i = 1; i <= 29; i++) {
  ruler.innerHTML += `<div class="bar${i < 9 ? " cycle" : ""}"><b>${i}</b><i></i></div>`;
  grid.innerHTML += "<span></span>";
}

// Region previews: [x1, x2, y]
const notes1 = [
  [2,50,13],[2,50,20],[2,50,30],[2,76,42],[54,74,13],[54,74,20],[54,74,30],[80,151,42],
  [101,139,13],[101,139,20],[101,139,30],[142,151,30],[151,177,13],[177,189,17],[189,202,21],[202,228,13],
  [202,407,47],[228,407,36],[253,407,25],[279,354,21],[304,342,8],[304,342,12],[355,394,8],[368,407,18],
  [394,407,13],[407,432,8],[407,584,54],[431,584,42],[445,584,33],[457,584,25],[482,534,13],[534,559,17],
  [559,609,21],[584,609,26],[609,634,12],[609,634,21],[609,788,50],[635,788,37],[648,788,30],[661,788,25],
  [674,711,18],[687,711,9],[711,788,18],[711,788,22]
];
const notes2 = [
  [0,38,18],[38,50,8],[50,88,18],[88,101,8],[101,140,13],[140,190,8],[190,203,13],[203,241,18],
  [241,254,8],[254,292,18],[292,305,8],[305,344,13],[344,394,8],[394,407,13],[407,508,18],[0,12,50],[458,508,50]
];
[33,40,33,40,33,40,33,54,33,44,33,44,33,44,33,50,40,33,40,33,40,33,40,54,33,44,33,44,33,44,33,50,33,40,33]
  .forEach((y, i) => notes2.push([12 + i * 12.8, 24 + i * 12.8, y]));

function drawNotes(id, list) {
  document.getElementById(id).innerHTML = list
    .map(([a, b, y]) => `<line x1="${a}" x2="${b}" y1="${y}" y2="${y}" stroke-width="4"/>`).join("");
}
drawNotes("region1", notes1);
drawNotes("region2", notes2);

// Channel strip scales
const marks = [[0,1],[3,8],[6,15],[9,22],[12,30],[15,37],[18,44],[21,51],[24,58],[30,67],[35,75],[40,83],[45,91],[50,99],[60,107]];
document.querySelectorAll(".scale").forEach(svg => {
  const meter = Number(svg.dataset.meter);
  const edge = meter > 4 ? 35 : 37;
  let out = `<rect x="13" y="0" width="2" height="110" fill="#1f1f1f"/>`;
  out += `<rect x="${edge + 3}" y="0" width="${meter}" height="110" fill="#262b26"/>`;
  [1, 18, 32, 44, 54, 65, 75, 84, 95, 100, 108].forEach(y => {
    out += `<line x1="4" x2="12" y1="${y}" y2="${y}"/>`;
  });
  for (let y = 4; y < 108; y += 3) {
    out += `<line x1="10" x2="12" y1="${y}" y2="${y}" opacity=".5"/>`;
  }
  marks.forEach(([n, y]) => {
    out += `<text x="${edge - 1}" y="${y + 2}">${n}</text><line x1="${edge}" x2="${edge + 2}" y1="${y}" y2="${y}"/>`;
  });
  svg.innerHTML = out;
});

// Score
let s = "";
const line = (x1, y1, x2, y2, c) => { s += `<line class="${c}" x1="${x1}" y1="${y1}" x2="${x2}" y2="${y2}"/>`; };
const path = (d, c, t = "") => { s += `<path class="${c}" d="${d}" transform="${t}"/>`; };
const head = (x, y) => { s += `<ellipse class="ink" cx="${x}" cy="${y}" rx="4.600" ry="3.200" transform="rotate(-20 ${x} ${y})"/>`; };
const half = (x, y) => { s += `<ellipse class="half" cx="${x}" cy="${y}" rx="3.800" ry="2.100" transform="rotate(-28 ${x} ${y})"/>`; };
const dot = (x, y) => { s += `<circle class="ink" cx="${x}" cy="${y}" r="1.400"/>`; };
const ledger = (x, y) => line(x - 6, y, x + 6, y, "stem");
const rest = (x, y) => path("M-7-28L7-11C0-4 3 3 11 12C1 9-4 18 4 28C-11 22-15 8 0 8L-10-4C-1-11-2-18-7-28Z", "ink", `translate(${x} ${y}) scale(.333)`);
const up = (x, y, top) => line(x + 3.7, y - 1, x + 3.7, top, "stem");
const down = (x, y, end) => line(x - 3.7, y + 1, x - 3.7, end, "stem");
const beam = (x1, y1, x2, y2) => path(`M${x1} ${y1}L${x2} ${y2}v3.500L${x1} ${y1 + 3.5}z`, "ink");

s += `<rect class="paper" x="207" y="272" width="757" height="590"/>`;
s += `<rect class="margin" x="227.500" y="299.500" width="715" height="600"/>`;

function system(top, bars) {
  [0, 70.3].forEach(part => {
    for (let i = 0; i < 5; i++) {
      line(264, top + part + i * 6.35, 924.5, top + part + i * 6.35, "staff");
    }
  });
  bars.forEach(x => line(x, top, x, top + 95.7, "barline"));
  const t = `translate(240 ${top - 28}) scale(.333)`;
  path("M63 84C34 100 42 140 56 175C61 198 58 215 42 228C58 241 61 258 56 281C42 316 34 352 63 371C48 350 52 320 64 285C72 255 62 240 46 228C62 216 72 200 64 172C52 136 48 106 63 84Z", "ink", t);
  // treble clef
  s += `<g class="spiral" transform="${t}">
    <path stroke-width="5" d="M108 100C102 80 108 60 117 58C125 62 124 80 112 93"/>
    <path stroke-width="9" d="M114 91C98 105 87 120 92 137C96 152 110 158 122 154"/>
    <path stroke-width="7" d="M118 156C137 151 137 125 120 123C105 121 99 137 110 147"/>
    <path stroke-width="4" d="M107 92L123 165C126 184 113 189 103 185"/>
    <circle class="ink" cx="105" cy="179" r="5"/>
  </g>`;
  // bass clef
  s += `<g class="clef" transform="${t}">
    <circle cx="100" cy="310" r="8"/>
    <path d="M91 310C91 288 127 287 129 314C130 336 108 348 88 355C104 344 118 334 117 314C116 293 98 294 95 306Z"/>
    <circle cx="136" cy="305" r="4"/><circle cx="136" cy="321" r="4"/>
  </g>`;
}

system(378, [264, 404.5, 551.5, 662.3, 801.3, 924.5]);
system(526, [264, 501.7, 752.6, 924.5]);

s += `<text x="276" y="365">1</text><text x="801" y="365">5</text>`;
[390, 403, 460.5, 473.5].forEach(y => { s += `<text class="time" x="298" y="${y}">4</text>`; });

// Filled heads: [x, y, stem direction, stem end]
const quarters = [
  [355,403,"u",381],[355,410,"u",381],[466.7,399.7,"u",376],[484.3,403,"u",376],[502.7,406,"u",376],[520,409.3,"u",376],
  [572,403,"u",381],[629.3,409.3,"u",387],[683,393.7,"u",372],[683,403,"u",372],[709.3,409.3,"u",387],[736.7,393.7,"u",372],
  [755.7,396.7,"u",373],[773.3,403,"u",376],[822,396.7,"u",375],[895.3,399.7,"u",378],
  [355.3,450.7,"d",474],[375.7,463.7,"u",442],[426.7,450.7,"d",474],[452,450.7,"d",474],[572,470,"u",448],[592.7,457.3,"d",480],
  [822.3,476.7,"u",455],[842,463.7,"d",489],[859.3,454,"d",485],
  [312,551.7,"u",530],[356.7,554.7,"u",533],[401,558,"u",536],[523.3,551.7,"u",530],[523.3,558,"u",530],[661.7,554.7,"u",533],[697.3,544.7,"u",523],
  [312.7,595.3,"d",618],[448,595.3,"d",618],[523.3,621,"u",599],[570,608,"d",634],[600.7,598.3,"d",629]
];
quarters.forEach(([x, y, dir, end]) => {
  head(x, y);
  dir === "u" ? up(x, y, end) : down(x, y, end);
});

const halves = [
  [328.7,403,"u",381],[328.7,410,"u",381],[426.3,403,"u",381],[426.3,410,"u",381],[328.7,450.7,"d",486],[328.7,463.7,"d",486],
  [612,447.7,"d",471],[877.7,447.7,"d",471],[773.3,554.7,"u",533],[631,592,"d",615],[774,592,"d",615]
];
halves.forEach(([x, y, dir, end]) => {
  half(x, y);
  dir === "u" ? up(x, y, end) : down(x, y, end);
});
s += `<ellipse class="ink" cx="684.300" cy="447.700" rx="5" ry="3.300"/><ellipse cx="684.300" cy="447.700" rx="1.500" ry="2.500" fill="#dadacc" transform="rotate(-25 684.300 447.700)"/>`;

[[328.7,410],[355,410],[426.3,410],[520,409.5],[629.3,409.5],[709.3,409.5],[401,558],[523.3,558]].forEach(p => ledger(...p));
[[691.3,393.7],[691.3,399.7],[434,451],[781.3,554.5],[781.3,592]].forEach(p => dot(...p));
[[376,391],[592.3,391],[612,391],[841.7,391],[877.3,391],[448,539],[570.3,539],[878.3,539],[356.7,608.5],[401.7,608.5],[878.3,608.5]].forEach(p => rest(...p));

beam(470, 374.5, 524.7, 374.5);
beam(759.3, 372, 777.3, 374.5);
beam(838, 486.5, 856, 482.5);
beam(566, 631.5, 597.3, 626.5);

// half rest, eighth rest, flags
s += `<rect class="ink" x="467" y="457.500" width="8" height="3.500"/>`;
path("M2 2C5 5 8 3 9 1L4 11", "hook", "translate(627 532.500)");
s += `<circle class="ink" cx="629.500" cy="534.500" r="2"/>`;
path("M0 0C1 5 8 7 4 16C5 10 3 7 0 6Z", "ink", "translate(713.300 388)");
path("M0 0C1 5 8 7 4 16C5 10 3 7 0 6Z", "ink", "translate(665.300 534)");
path("M0 0C1-5 8-7 4-16C5-10 3-7 0-6Z", "ink", "translate(448.300 474)");

// ties
path("M617.300 443C630 433 664 432 678.300 443", "curve");
path("M883.300 443C895 435.500 912 436 922.700 443", "curve");
path("M292.700 590.700C297 585.500 303 585.500 307.300 590.700", "curve");
path("M636.700 587C665 570 740 570 768.700 587", "curve");

document.getElementById("score").innerHTML = s;
```
